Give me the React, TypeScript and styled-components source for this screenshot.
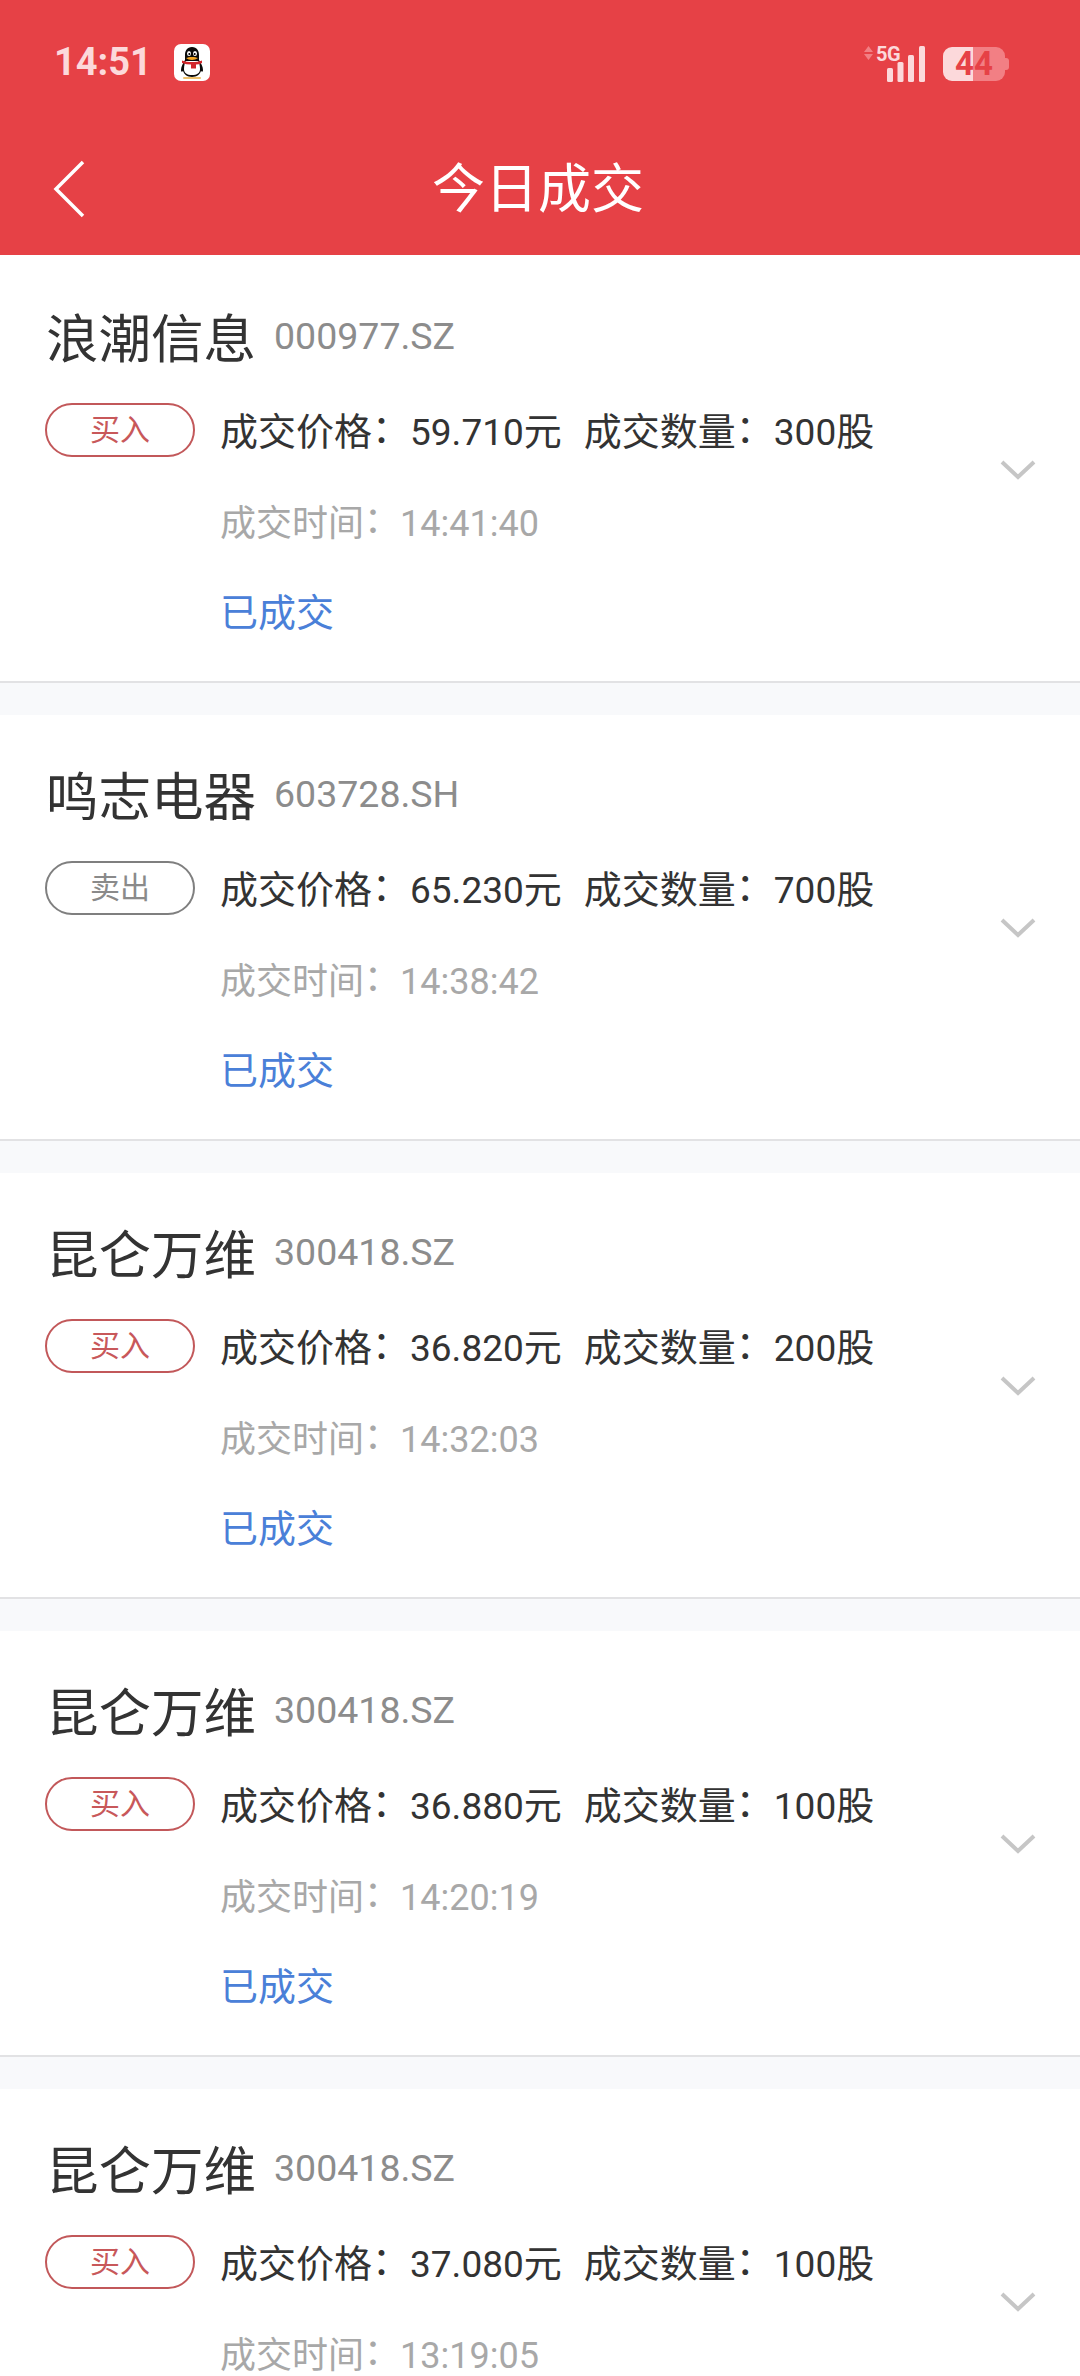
import { createGlobalStyle } from 'styled-components'
import styled from 'styled-components'

const GlobalStyle = createGlobalStyle`
  html, body {
    margin: 0;
    padding: 0;
    background: #f8f9fb;
  }
  body {
    font-family: Roboto, "Noto Sans CJK SC", sans-serif;
  }
`

const trades = [
  { name: '浪潮信息', code: '000977.SZ', side: 'buy', price: '59.710', qty: '300', time: '14:41:40' },
  { name: '鸣志电器', code: '603728.SH', side: 'sell', price: '65.230', qty: '700', time: '14:38:42' },
  { name: '昆仑万维', code: '300418.SZ', side: 'buy', price: '36.820', qty: '200', time: '14:32:03' },
  { name: '昆仑万维', code: '300418.SZ', side: 'buy', price: '36.880', qty: '100', time: '14:20:19' },
  { name: '昆仑万维', code: '300418.SZ', side: 'buy', price: '37.080', qty: '100', time: '13:19:05' },
]

const App = () => {
  return (
    <Page>
      <GlobalStyle />
      <Header>
        <StatusBar>
          <StatusLeft>
            <Clock>14:51</Clock>
            <QQIcon />
          </StatusLeft>
          <StatusRight>
            <SignalIcon />
            <Battery>
              <BatteryLevel>44</BatteryLevel>
            </Battery>
          </StatusRight>
        </StatusBar>
        <NavBar>
          <BackIcon />
          <NavTitle>今日成交</NavTitle>
        </NavBar>
      </Header>
      <List>
        {trades.map((t, i) => (
          <Card key={i}>
            <TitleRow>
              <Name>{t.name}</Name>
              <Code>{t.code}</Code>
            </TitleRow>
            <Body>
              <Badge $side={t.side}>{t.side === 'buy' ? '买入' : '卖出'}</Badge>
              <Details>
                <MainLine>
                  <span>成交价格<Colon>：</Colon><Num>{t.price}</Num>元</span>
                  <span>成交数量<Colon>：</Colon><Num>{t.qty}</Num>股</span>
                </MainLine>
                <TimeLine>成交时间<Colon>：</Colon>{t.time}</TimeLine>
                <Status>已成交</Status>
              </Details>
              <ChevronWrap>
                <Chevron />
              </ChevronWrap>
            </Body>
          </Card>
        ))}
      </List>
    </Page>
  )
}

export default App

const QQIcon = () => (
  <svg width="36" height="37" viewBox="0 0 36 37">
    <rect width="36" height="37" rx="7" fill="#fff" />
    <path d="M18 3c-5 0-7 4-7 8v5c-2 3-4 7-4 10 0 2 1 2 2 1 1 3 4 6 9 6s8-3 9-6c1 1 2 1 2-1 0-3-2-7-4-10v-5c0-4-2-8-7-8z" fill="#0a0a0a" />
    <path d="M10 25c0-4 1-7 2-8h12c1 1 2 4 2 8 0 4-3 6-8 6s-8-2-8-6z" fill="#fff" />
    <path d="M8 16.500c6 2 14 2 20 0l0 2.500c-2 1-4 1.500-6 1.500v4h-5v-4c-3 0-6-.5-9-1.500z" fill="#d2262b" />
    <ellipse cx="15" cy="9.500" rx="2" ry="2.500" fill="#fff" />
    <ellipse cx="21" cy="9.500" rx="2" ry="2.500" fill="#fff" />
    <circle cx="15.300" cy="10" r="1" fill="#000" />
    <circle cx="20.700" cy="10" r="1" fill="#000" />
    <path d="M12 14c3-1.500 9-1.500 12 0-3 2.500-9 2.500-12 0z" fill="#f5a623" />
    <rect x="9" y="33" width="18" height="2" rx="1" fill="#eec06b" />
  </svg>
)

const SignalIcon = () => (
  <svg width="62" height="36" viewBox="0 0 62 36">
    <path d="M4.500 0L9 6H0z M4.500 14L9 8H0z" fill="#f27f84" />
    <text x="12" y="15" fontFamily="Roboto, sans-serif" fontWeight="700" fontSize="20" letterSpacing="-0.5" fill="#fcd9db">5G</text>
    <g fill="#fcd9db">
      <rect x="23" y="22" width="6" height="14" rx="1.500" />
      <rect x="33.500" y="16" width="6" height="20" rx="1.500" />
      <rect x="44" y="9" width="6" height="27" rx="1.500" />
      <rect x="55" y="0" width="6" height="36" rx="1.500" />
    </g>
  </svg>
)

const BackIcon = () => (
  <BackSvg width="36" height="60" viewBox="0 0 36 60">
    <path d="M33 2L6 29l27 27" fill="none" stroke="#fff" strokeWidth="3.500" />
  </BackSvg>
)

const Chevron = () => (
  <svg width="36" height="22" viewBox="0 0 36 22">
    <path d="M2 3l16 15L34 3" fill="none" stroke="#c6c6c6" strokeWidth="4" />
  </svg>
)

const Page = styled.div`
  width: 1080px;
  height: 2376px;
  overflow: hidden;
  background: #f8f9fb;
`

const Header = styled.header`
  height: 255px;
  background: #e64146;
  display: flex;
  flex-direction: column;
`

const StatusBar = styled.div`
  height: 160px;
  box-sizing: border-box;
  padding: 44px 75px 0 54px;
  display: flex;
  justify-content: space-between;
  align-items: flex-start;
`

const StatusLeft = styled.div`
  display: flex;
  align-items: center;
  gap: 22px;
`

const Clock = styled.span`
  font-size: 38px;
  font-weight: 700;
  line-height: 37px;
  color: #fcd9db;
`

const StatusRight = styled.div`
  display: flex;
  align-items: center;
  gap: 17px;
  margin-top: 2px;
`

const Battery = styled.div`
  position: relative;
  width: 62px;
  height: 34px;
  border-radius: 9px;
  display: flex;
  align-items: center;
  justify-content: center;
  background: linear-gradient(to right, #fcd9db 0 30px, #f27f84 30px);

  &::after {
    content: '';
    position: absolute;
    right: -4px;
    top: 11px;
    width: 4px;
    height: 12px;
    border-radius: 0 3px 3px 0;
    background: #f27f84;
  }
`

const BatteryLevel = styled.span`
  font-size: 33px;
  font-weight: 700;
  line-height: 34px;
  color: #e64146;
`

const NavBar = styled.div`
  position: relative;
  height: 60px;
  display: flex;
  align-items: center;
  justify-content: center;
`

const BackSvg = styled.svg`
  position: absolute;
  left: 50px;
  top: 0;
`

const NavTitle = styled.div`
  font-size: 53px;
  line-height: 60px;
  color: #fff;
  margin-left: -4px;
`

const List = styled.div`
  display: flex;
  flex-direction: column;
  gap: 32px;
`

const Card = styled.section`
  height: 426px;
  box-sizing: border-box;
  background: #fff;
  border-bottom: 2px solid #e2e2e4;
  padding: 53px 0 0 45px;

  &:first-child {
    height: 428px;
    padding-top: 55px;
  }
`

const TitleRow = styled.div`
  display: flex;
  align-items: center;
  height: 60px;
  gap: 18px;
  padding-left: 1px;
`

const Name = styled.div`
  font-size: 52.500px;
  line-height: 60px;
  color: #333;
`

const Code = styled.div`
  font-size: 37.500px;
  line-height: 40px;
  color: #8c8c8c;
  margin-top: -8px;
`

const Body = styled.div`
  display: flex;
  align-items: flex-start;
  margin-top: 33px;
`

const Badge = styled.div<{ $side: string }>`
  box-sizing: border-box;
  width: 150px;
  height: 54px;
  border-radius: 27px;
  border: 2px solid ${(p) => (p.$side === 'buy' ? '#c2585a' : '#7f7f7f')};
  color: ${(p) => (p.$side === 'buy' ? '#c8585a' : '#8a8a8a')};
  font-size: 30px;
  line-height: 50px;
  text-align: center;
`

const Details = styled.div`
  margin: 1px 0 0 25px;
  display: flex;
  flex-direction: column;
  width: 780px;
`

const MainLine = styled.div`
  display: flex;
  gap: 22px;
  font-size: 38px;
  line-height: 56px;
  color: #333;
`

const Colon = styled.span`
  line-height: 0;
  vertical-align: 0.08em;
`

const Num = styled.span`
  font-size: 37px;
`

const TimeLine = styled.div`
  margin-top: 35px;
  font-size: 36px;
  line-height: 56px;
  color: #a8a8a8;
`

const Status = styled.div`
  margin-top: 33px;
  font-size: 38px;
  line-height: 56px;
  color: #4a80d8;
`

const ChevronWrap = styled.div`
  margin-top: 56px;
  display: flex;
`
